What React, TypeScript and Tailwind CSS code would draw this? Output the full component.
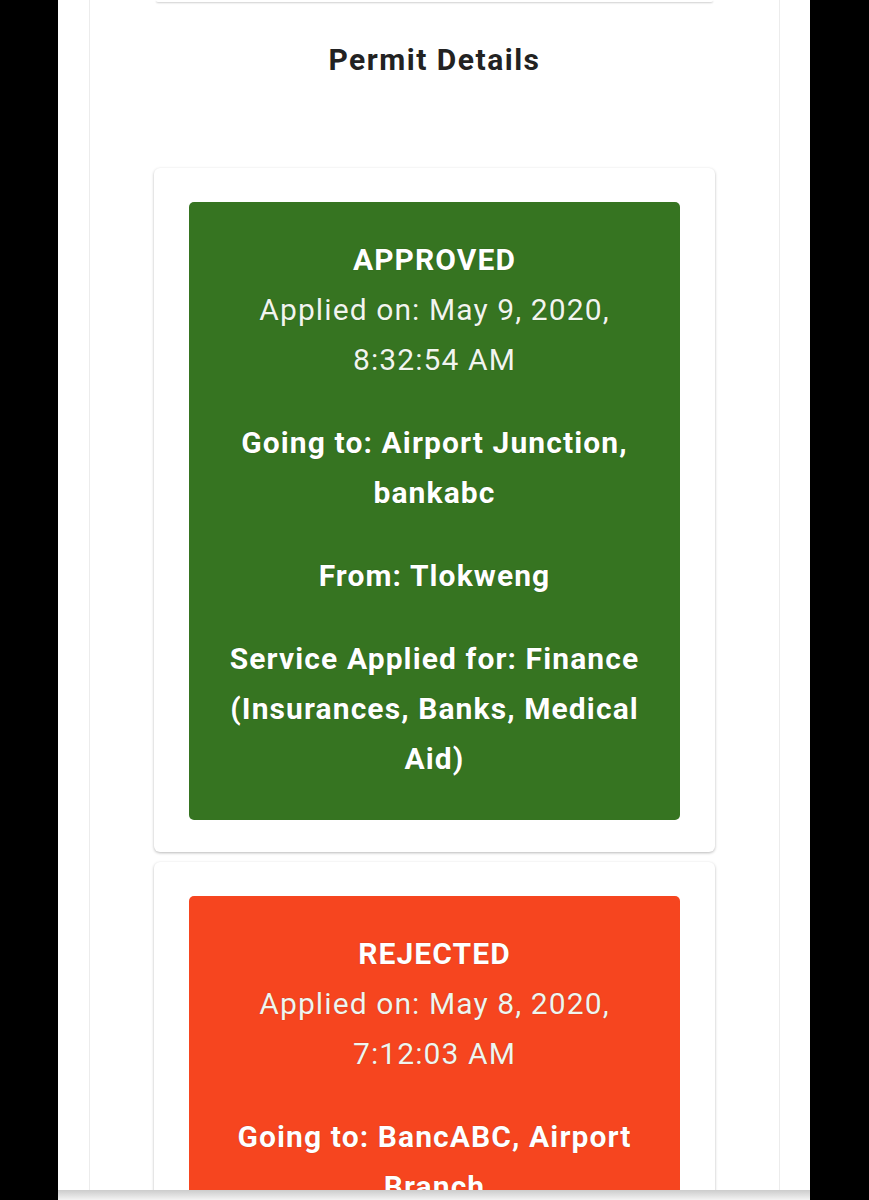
import React from "react";

type Permit = {
  status: string;
  applied: string;
  going: string;
  from?: string;
  service?: string;
  color: string;
};

const permits: Permit[] = [
  {
    status: "APPROVED",
    applied: "Applied on: May 9, 2020, 8:32:54 AM",
    going: "Going to: Airport Junction, bankabc",
    from: "From: Tlokweng",
    service: "Service Applied for: Finance (Insurances, Banks, Medical Aid)",
    color: "green",
  },
  {
    status: "REJECTED",
    applied: "Applied on: May 8, 2020, 7:12:03 AM",
    going: "Going to: BancABC, Airport Branch",
    from: "From: Tlokweng",
    service: "Service Applied for: Finance (Insurances, Banks, Medical Aid)",
    color: "red",
  },
];

function PermitCard({ p }: { p: Permit }) {
  const bg = p.color === "green" ? "bg-[#367421]" : "bg-[#f6451f]";
  return (
    <div className="mx-[64px] rounded-[6px] bg-white px-[35px] pt-[34px] pb-[32px] shadow-[0_1px_3px_rgba(0,0,0,0.28)]">
      <div
        className={`${bg} rounded-[5px] px-[30px] pt-[33px] pb-[36px] text-center text-white text-[30px] leading-[50px] tracking-[1.1px] [text-shadow:0_0_1px_rgba(0,0,0,0.35)]`}
      >
        <div className="font-bold">{p.status}</div>
        <div className="font-normal text-[#f1f5ee]">{p.applied}</div>
        <div className="mt-[33px] font-bold">{p.going}</div>
        {p.from && <div className="mt-[33px] font-bold">{p.from}</div>}
        {p.service && <div className="mt-[33px] font-bold">{p.service}</div>}
      </div>
    </div>
  );
}

export default function App() {
  return (
    <div
      className="relative w-[869px] h-[1200px] overflow-hidden bg-black"
      style={{ fontFamily: "Roboto, 'Noto Sans', 'Liberation Sans', sans-serif" }}
    >
      <div className="ml-[58px] w-[752px] h-full bg-white">
        <div className="ml-[31px] w-[691px] h-full border-x border-[#ececec]">
          <div className="mx-[66px] h-[2px] rounded-b-[4px] bg-white shadow-[0_1px_2px_rgba(0,0,0,0.2)]" />
          <h1 className="mt-[40px] text-center text-[30px] leading-[36px] font-bold text-[#222222] tracking-[1.5px]">
            Permit Details
          </h1>
          <div className="mt-[90px] flex flex-col gap-[10px]">
            {permits.map((p) => (
              <PermitCard key={p.status} p={p} />
            ))}
          </div>
        </div>
      </div>
      <div className="absolute bottom-0 left-[58px] w-[752px] h-[10px] bg-linear-to-b from-[#cccccc] to-[#f3f3f3]" />
    </div>
  );
}
